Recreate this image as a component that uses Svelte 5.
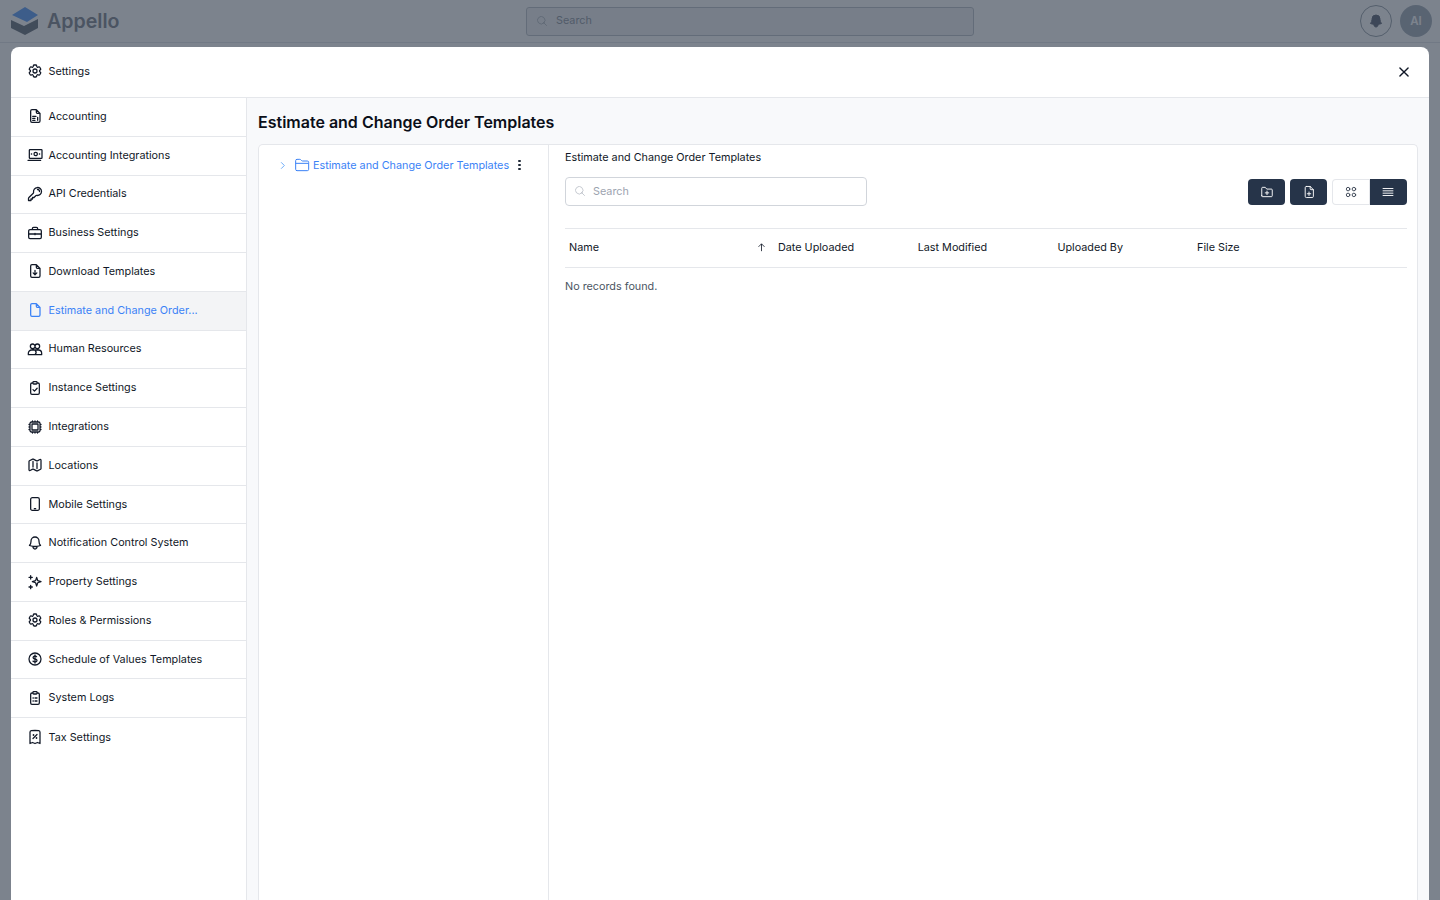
<script lang="ts">
  // 24x24 outline icons, one path string each
  const cog =
    'M9.594 3.94c.09-.542.56-.94 1.11-.94h2.593c.55 0 1.02.398 1.11.94l.213 1.281c.063.374.313.686.645.87.074.04.147.083.22.127.325.196.72.257 1.075.124l1.217-.456a1.125 1.125 0 0 1 1.37.49l1.296 2.247a1.125 1.125 0 0 1-.26 1.431l-1.003.827c-.293.241-.438.613-.43.992a7.723 7.723 0 0 1 0 .255c-.008.378.137.75.43.991l1.004.827c.424.35.534.955.26 1.43l-1.298 2.247a1.125 1.125 0 0 1-1.369.491l-1.217-.456c-.355-.133-.75-.072-1.076.124a6.47 6.47 0 0 1-.22.128c-.331.183-.581.495-.644.869l-.213 1.281c-.09.543-.56.94-1.11.94h-2.594c-.55 0-1.019-.398-1.11-.94l-.213-1.281c-.062-.374-.312-.686-.644-.87a6.52 6.52 0 0 1-.22-.127c-.325-.196-.72-.257-1.076-.124l-1.217.456a1.125 1.125 0 0 1-1.369-.49l-1.297-2.247a1.125 1.125 0 0 1 .26-1.431l1.004-.827c.292-.24.437-.613.43-.991a6.932 6.932 0 0 1 0-.255c.007-.38-.138-.751-.43-.992l-1.004-.827a1.125 1.125 0 0 1-.26-1.43l1.297-2.247a1.125 1.125 0 0 1 1.37-.491l1.216.456c.356.133.751.072 1.076-.124.072-.044.146-.086.22-.128.332-.183.582-.495.644-.869l.214-1.28Z M15 12a3 3 0 1 1-6 0 3 3 0 0 1 6 0Z';
  const doc = 'M7.5 2.5h6.5l5.5 5.5v11.5a2 2 0 0 1-2 2h-10a2 2 0 0 1-2-2v-15a2 2 0 0 1 2-2z';
  const fold = ' M14 2.5v4a1.5 1.5 0 0 0 1.5 1.5h4';
  const bell =
    'M14.857 17.082a23.848 23.848 0 0 0 5.454-1.31A8.967 8.967 0 0 1 18 9.75V9A6 6 0 0 0 6 9v.75a8.967 8.967 0 0 1-2.312 6.022c1.733.64 3.56 1.085 5.455 1.31m5.714 0a24.255 24.255 0 0 1-5.714 0m5.714 0a3 3 0 1 1-5.714 0';
  const clip = 'M9 4.5H7.5a2 2 0 0 0-2 2v13a2 2 0 0 0 2 2h9a2 2 0 0 0 2-2v-13a2 2 0 0 0-2-2H15 M10 2.5h4a1 1 0 0 1 1 1v1.5a1 1 0 0 1-1 1h-4a1 1 0 0 1-1-1V3.5a1 1 0 0 1 1-1z';

  const items = [
    { label: 'Accounting', icon: doc + fold + ' M8.5 12.5h5 M8.5 15.5h3.5 M8.5 18.500h3.5 M16 14v4.500' },
    { label: 'Accounting Integrations', icon: 'M4.5 4h17a1 1 0 0 1 1 1v11a1 1 0 0 1-1 1h-17a1 1 0 0 1-1-1V5a1 1 0 0 1 1-1z M1.5 20h19 M15.5 10.5a2.5 2.5 0 1 1-5 0 2.5 2.5 0 0 1 5 0z M6.5 10.5h.5 M18.5 10.5h.5' },
    { label: 'API Credentials', icon: 'M15.75 5.25a3 3 0 0 1 3 3m3 0a6 6 0 0 1-7.029 5.912c-.563-.097-1.159.026-1.563.43L10.5 17.25H8.25v2.25H6v2.25H2.25v-2.818c0-.597.237-1.17.659-1.591l6.499-6.499c.404-.404.527-1 .43-1.563A6 6 0 1 1 21.75 8.25Z' },
    { label: 'Business Settings', icon: 'M4.5 7h15a2 2 0 0 1 2 2v9.5a2 2 0 0 1-2 2h-15a2 2 0 0 1-2-2V9a2 2 0 0 1 2-2z M8 7V5.5a2 2 0 0 1 2-2h4a2 2 0 0 1 2 2V7 M2.5 13.5h19 M12 12.5v2' },
    { label: 'Download Templates', icon: doc + fold + ' M12 11v6.5 M9.2 14.8l2.8 2.8 2.8-2.8' },
    { label: 'Estimate and Change Order...', icon: doc + fold, active: true },
    { label: 'Human Resources', icon: 'M12 8a3.5 3.5 0 1 1-7 0 3.5 3.5 0 0 1 7 0z M19 8a3.5 3.5 0 1 1-7 0 3.5 3.5 0 0 1 7 0z M2 20.5v-2a5 5 0 0 1 5-5h10a5 5 0 0 1 5 5v2z M12 13.5a5 5 0 0 1 0 7' },
    { label: 'Instance Settings', icon: clip + ' M9 14.5l2.2 2.2 4-4.4' },
    { label: 'Integrations', icon: 'M8.25 3v1.5M4.5 8.25H3m18 0h-1.5M4.5 12H3m18 0h-1.5m-15 3.75H3m18 0h-1.5M8.25 19.5V21M12 3v1.5m0 15V21m3.75-18v1.5m0 15V21m-9-1.5h10.5a2.25 2.25 0 0 0 2.25-2.25V6.75a2.25 2.25 0 0 0-2.25-2.25H6.75A2.25 2.25 0 0 0 4.5 6.75v10.5a2.25 2.25 0 0 0 2.25 2.25Zm.75-12h9v9h-9v-9Z' },
    { label: 'Locations', icon: 'M9 6.75V15m6-6v8.25m.503 3.498 4.875-2.437c.381-.19.622-.58.622-1.006V4.82c0-.836-.88-1.38-1.628-1.006l-3.869 1.934c-.317.159-.69.159-1.006 0L9.503 3.252a1.125 1.125 0 0 0-1.006 0L3.622 5.689C3.24 5.88 3 6.27 3 6.695V19.18c0 .836.88 1.38 1.628 1.006l3.869-1.934c.317-.159.69-.159 1.006 0l4.994 2.497c.317.158.69.158 1.006 0Z' },
    { label: 'Mobile Settings', icon: 'M8 2.5h8a2.5 2.5 0 0 1 2.5 2.5v14a2.5 2.5 0 0 1-2.5 2.5H8A2.5 2.5 0 0 1 5.5 19V5A2.5 2.5 0 0 1 8 2.5z M11 19h2' },
    { label: 'Notification Control System', icon: bell },
    { label: 'Property Settings', icon: 'M14.5 5l1.6 4.9 4.9 1.6-4.9 1.6-1.6 4.9-1.6-4.9-4.9-1.6 4.9-1.6z M5.5 2.5v5 M3 5h5 M5.5 17v5 M3 19.5h5' },
    { label: 'Roles & Permissions', icon: cog },
    { label: 'Schedule of Values Templates', icon: 'M12 6v12m-3-2.818.879.659c1.171.879 3.07.879 4.242 0 1.172-.879 1.172-2.303 0-3.182C13.536 12.219 12.768 12 12 12c-.725 0-1.45-.22-2.003-.659-1.106-.879-1.106-2.303 0-3.182s2.9-.879 4.006 0l.415.33M21 12a9 9 0 1 1-18 0 9 9 0 0 1 18 0Z' },
    { label: 'System Logs', icon: clip + ' M9 12h.5 M12 12h3 M9 16.5h.5 M12 16.5h3' },
    { label: 'Tax Settings', icon: 'M9 14.25l6-6m4.5-3.493V21.75l-3.75-1.5-3.75 1.5-3.75-1.5-3.75 1.5V4.757c0-1.108.806-2.057 1.907-2.185a48.507 48.507 0 0 1 11.186 0c1.1.128 1.907 1.077 1.907 2.185ZM9.75 9h.008v.008H9.75V9Zm.375 0a.375.375 0 1 1-.75 0 .375.375 0 0 1 .75 0Zm4.125 4.5h.008v.008h-.008V13.5Zm.375 0a.375.375 0 1 1-.75 0 .375.375 0 0 1 .75 0Z' },
  ];

  const columns = ['Date Uploaded', 'Last Modified', 'Uploaded By', 'File Size'];
  const search = 'M21 21l-5.197-5.197m0 0A7.5 7.5 0 1 0 5.196 5.196a7.5 7.5 0 0 0 10.607 10.607Z';
</script>

<div class="app">
  <header class="topbar">
    <div class="brand">
      <svg class="logo" viewBox="0 0 28 28" aria-hidden="true">
        <path d="M15 0 28 8 17 15 2 8z" fill="#6aa5f8" />
        <path d="M1 13 14 19 28 12V21L15 28 1 21z" fill="#747c85" />
      </svg>
      <span>Appello</span>
    </div>
    <div class="top-search">
      <svg viewBox="0 0 24 24" class="ico-s"><path d={search} /></svg>
      <span>Search</span>
    </div>
    <div class="top-right">
      <div class="bell">
        <svg viewBox="0 0 24 24" class="bell-ico"><path d={bell} /></svg>
      </div>
      <div class="avatar">AI</div>
    </div>
  </header>

  <div class="overlay"></div>

  <section class="modal">
    <div class="modal-head">
      <svg viewBox="0 0 24 24" class="ico"><path d={cog} /></svg>
      <span>Settings</span>
      <button class="close" aria-label="Close">
        <svg viewBox="0 0 24 24"><path d="M5 5l14 14M19 5L5 19" /></svg>
      </button>
    </div>

    <div class="modal-body">
      <nav class="side">
        {#each items as item}
          <div class="side-item" class:active={item.active}>
            <svg viewBox="0 0 24 24" class="ico"><path d={item.icon} /></svg>
            <span>{item.label}</span>
          </div>
        {/each}
      </nav>

      <main class="content">
        <h1>Estimate and Change Order Templates</h1>
        <div class="card">
          <div class="tree">
            <div class="tree-row">
              <svg viewBox="0 0 24 24" class="chev"><path d="M9 5l7 7-7 7" /></svg>
              <svg viewBox="0 0 24 24" class="folder"><path d="M2.5 18.5v-13a2 2 0 0 1 2-2h4.2a2 2 0 0 1 1.4.6l1.3 1.3a2 2 0 0 0 1.4.6h7.2a2 2 0 0 1 2 2v10.5a2 2 0 0 1-2 2h-15.500a2 2 0 0 1-2-2z M2.500 9.500h19" /></svg>
              <span>Estimate and Change Order Templates</span>
              <div class="dots"><i></i><i></i><i></i></div>
            </div>
          </div>

          <div class="files">
            <div class="crumb">Estimate and Change Order Templates</div>
            <div class="tools">
              <div class="file-search">
                <svg viewBox="0 0 24 24" class="ico-s"><path d={search} /></svg>
                <span>Search</span>
              </div>
              <div class="actions">
                <button class="dark-btn" aria-label="New folder">
                  <svg viewBox="0 0 24 24"><path d="M3 18.500v-13a1.500 1.500 0 0 1 1.500-1.500h4.500l2.500 3h8a1.500 1.500 0 0 1 1.500 1.500v10a1.500 1.500 0 0 1-1.500 1.500h-15a1.500 1.500 0 0 1-1.500-1.500z M12 10.500v6 M9 13.500h6" /></svg>
                </button>
                <button class="dark-btn" aria-label="New file">
                  <svg viewBox="0 0 24 24"><path d={doc + fold + ' M12 12v6 M9 15h6'} /></svg>
                </button>
                <div class="toggle">
                  <button class="tog" aria-label="Grid view">
                    <svg viewBox="0 0 24 24"><path d="M10 7a3 3 0 1 1-6 0 3 3 0 0 1 6 0z M20 7a3 3 0 1 1-6 0 3 3 0 0 1 6 0z M10 17a3 3 0 1 1-6 0 3 3 0 0 1 6 0z M20 17a3 3 0 1 1-6 0 3 3 0 0 1 6 0z" /></svg>
                  </button>
                  <button class="tog on" aria-label="List view">
                    <svg viewBox="0 0 24 24"><path d="M3.500 6h17 M3.500 10h17 M3.500 14h17 M3.500 18h17" /></svg>
                  </button>
                </div>
              </div>
            </div>

            <div class="thead">
              <div class="th name">
                <span>Name</span>
                <svg viewBox="0 0 24 24" class="arrow"><path d="M12 20V4 M5.500 10.500 12 4l6.500 6.500" /></svg>
              </div>
              {#each columns as col}
                <div class="th">{col}</div>
              {/each}
            </div>
            <p class="empty">No records found.</p>
          </div>
        </div>
      </main>
    </div>
  </section>
</div>

<style>
  :global(body) {
    margin: 0;
    font-family: Inter, 'Liberation Sans', sans-serif;
    background: #fff;
    overflow: hidden;
  }

  .app {
    position: relative;
    height: 900px;
    overflow: hidden;
  }

  .topbar {
    display: flex;
    align-items: center;
    height: 42px;
    padding-left: 10px;
    padding-right: 8px;
    border-bottom: 1px solid #e5e7eb;
    position: relative;
  }

  .brand {
    display: flex;
    align-items: center;
    gap: 9px;
    width: 516px;
    font-size: 19.6px;
    font-weight: 600;
    color: #8a8f98;
  }

  .logo {
    width: 28px;
    height: 28px;
  }

  .top-search {
    display: flex;
    align-items: center;
    gap: 8px;
    width: 448px;
    height: 29px;
    box-sizing: border-box;
    padding: 0 0 1px 9px;
    border: 1px solid #c4c9cf;
    border-radius: 3px;
    background: #f3f4f6;
    font-size: 10.8px;
    color: #9aa1aa;
  }

  .top-right {
    display: flex;
    align-items: center;
    gap: 8px;
    margin-left: auto;
  }

  .bell {
    display: flex;
    align-items: center;
    justify-content: center;
    width: 32px;
    height: 32px;
    border: 1px solid #a0a8b0;
    border-radius: 50%;
    box-sizing: border-box;
  }

  .bell-ico {
    width: 16px;
    height: 16px;
    fill: #6a7180;
    stroke: #6a7180;
    stroke-width: 1.5;
  }

  .avatar {
    display: flex;
    align-items: center;
    justify-content: center;
    width: 32px;
    height: 32px;
    border-radius: 50%;
    background: #adb5bf;
    color: #fff;
    font-size: 11.5px;
    font-weight: 600;
  }

  .overlay {
    position: absolute;
    inset: 0;
    background: rgba(30, 41, 59, 0.58);
  }

  .modal {
    position: absolute;
    top: 47px;
    left: 11px;
    right: 11px;
    bottom: 0;
    display: flex;
    flex-direction: column;
    background: #fff;
    border-radius: 8px 8px 0 0;
    overflow: hidden;
  }

  .modal-head {
    display: flex;
    align-items: center;
    gap: 5.5px;
    height: 51px;
    flex: none;
    box-sizing: border-box;
    padding: 0 17px 2px 16px;
    border-bottom: 1px solid #e5e7eb;
    font-size: 10.8px;
    color: #111827;
  }

  .ico {
    width: 16px;
    height: 16px;
    flex: none;
    fill: none;
    stroke: currentColor;
    stroke-width: 1.9;
    stroke-linecap: round;
    stroke-linejoin: round;
  }

  .ico-s {
    width: 12px;
    height: 12px;
    fill: none;
    stroke: currentColor;
    stroke-width: 1.5;
    stroke-linecap: round;
    stroke-linejoin: round;
    opacity: 0.75;
  }

  .close {
    margin-left: auto;
    display: flex;
    padding: 0;
    margin-right: 1px;
    margin-top: 2px;
    border: 0;
    background: none;
  }

  .close svg {
    width: 14px;
    height: 14px;
    fill: none;
    stroke: #111827;
    stroke-width: 2.4;
    stroke-linecap: round;
  }

  .modal-body {
    flex: 1;
    display: flex;
    min-height: 0;
  }

  .side {
    width: 236px;
    flex: none;
    box-sizing: border-box;
    border-right: 1px solid #e5e7eb;
  }

  .side-item {
    display: flex;
    align-items: center;
    gap: 5.5px;
    height: 38.78px;
    box-sizing: border-box;
    padding-left: 16px;
    padding-bottom: 1px;
    border-bottom: 1px solid #e5e7eb;
    font-size: 10.8px;
    color: #111827;
  }

  .side-item:last-child {
    border-bottom: 0;
  }

  .side-item.active {
    background: #f3f4f6;
    color: #3b82f6;
  }

  .content {
    flex: 1;
    min-width: 0;
    display: flex;
    flex-direction: column;
    box-sizing: border-box;
    padding: 0 11px 0 11px;
    background: #f8f9fb;
  }

  h1 {
    margin: 0;
    height: 46px;
    padding-top: 1px;
    box-sizing: content-box;
    flex: none;
    display: flex;
    align-items: center;
    font-size: 16px;
    font-weight: 600;
    color: #0b0f19;
    margin-bottom: -1px;
  }

  .card {
    flex: 1;
    display: flex;
    background: #fff;
    border: 1px solid #e5e7eb;
    border-bottom: 0;
    border-radius: 5px 5px 0 0;
  }

  .tree {
    width: 290px;
    flex: none;
    box-sizing: border-box;
    border-right: 1px solid #e5e7eb;
    padding: 12px 0 0 18px;
  }

  .tree-row {
    display: flex;
    align-items: center;
    font-size: 10.8px;
    color: #3b82f6;
  }

  .chev {
    width: 11px;
    height: 11px;
    margin-right: 6px;
    fill: none;
    stroke: #60a5fa;
    stroke-width: 2;
  }

  .folder {
    width: 16px;
    height: 16px;
    margin-right: 3px;
    fill: none;
    stroke: #3b82f6;
    stroke-width: 1.5;
  }

  .dots {
    display: flex;
    flex-direction: column;
    gap: 1.5px;
    margin-left: 9px;
  }

  .dots i {
    width: 2.5px;
    height: 2.5px;
    border-radius: 50%;
    background: #1f2937;
  }

  .files {
    flex: 1;
    min-width: 0;
    box-sizing: border-box;
    padding: 6px 10px 0 16px;
  }

  .crumb {
    font-size: 10.8px;
    line-height: 13px;
    color: #111827;
  }

  .tools {
    display: flex;
    align-items: center;
    justify-content: space-between;
    margin-top: 13px;
  }

  .file-search {
    display: flex;
    align-items: center;
    gap: 7px;
    width: 302px;
    height: 29px;
    box-sizing: border-box;
    padding: 0 0 1px 8px;
    border: 1px solid #d1d5db;
    border-radius: 4px;
    font-size: 10.8px;
    color: #9ca3af;
  }

  .actions {
    display: flex;
    gap: 5px;
  }

  .dark-btn,
  .tog {
    display: flex;
    align-items: center;
    justify-content: center;
    height: 26px;
    padding: 0;
    border: 0;
    background: #263449;
    border-radius: 4px;
  }

  .dark-btn {
    width: 37px;
  }

  .actions svg {
    width: 14px;
    height: 14px;
    fill: none;
    stroke: #fff;
    stroke-width: 1.6;
    stroke-linecap: round;
    stroke-linejoin: round;
  }

  .toggle {
    display: flex;
  }

  .tog {
    width: 37.500px;
    border-radius: 4px 0 0 4px;
    background: #fff;
    box-shadow: inset 0 0 0 1px #e5e7eb;
  }

  .tog.on {
    border-radius: 0 4px 4px 0;
    background: #263449;
    box-shadow: none;
  }

  .actions .tog:not(.on) svg {
    stroke: #374151;
  }

  .thead {
    display: flex;
    align-items: center;
    height: 40px;
    box-sizing: border-box;
    margin-top: 22px;
    padding: 0 0 1px 4px;
    border-top: 1px solid #e5e7eb;
    border-bottom: 1px solid #e5e7eb;
    font-size: 10.8px;
    color: #111827;
  }

  .th {
    width: 139.700px;
    flex: none;
  }

  .th.name {
    display: flex;
    align-items: center;
    justify-content: space-between;
    width: 209px;
    padding-right: 11px;
    box-sizing: border-box;
  }

  .arrow {
    width: 11px;
    height: 11px;
    fill: none;
    stroke: #111827;
    stroke-width: 1.8;
  }

  .empty {
    margin: 12px 0 0;
    font-size: 10.8px;
    line-height: 14px;
    color: #4b5563;
  }
</style>
